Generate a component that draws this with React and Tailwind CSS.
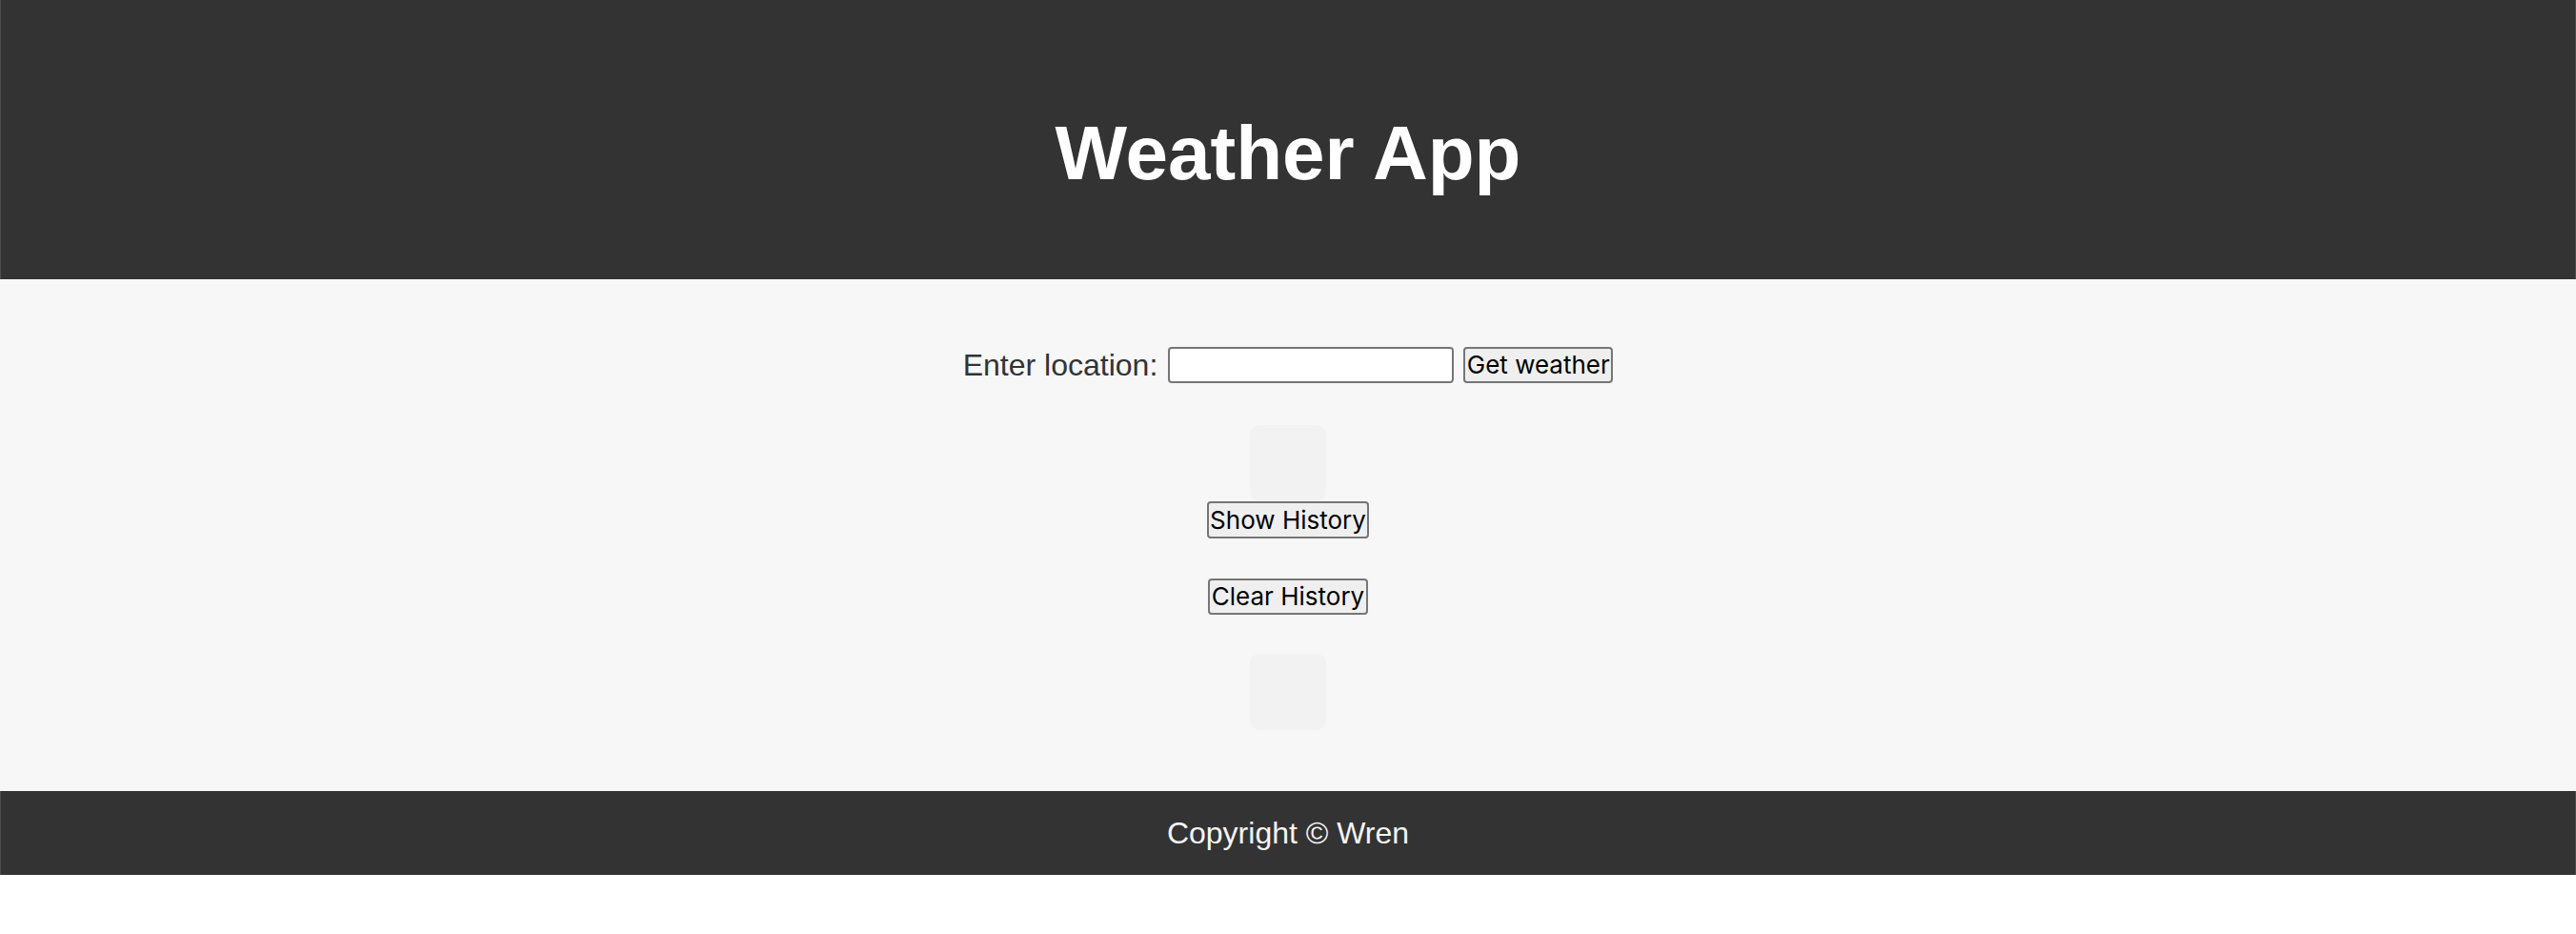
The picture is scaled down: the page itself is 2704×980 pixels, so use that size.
import { useState } from 'react';

export default function App() {
  const [location, setLocation] = useState('');

  return (
    <div className="min-h-screen bg-white font-['Liberation_Sans',Arial,sans-serif]">
      <header className="h-[293px] bg-[#333333] border-x border-[#4d4d4d] pt-[115px] text-center">
        <h1 className="text-[80px] leading-[92px] font-bold text-white">Weather App</h1>
      </header>

      <main className="h-[537px] bg-[#f7f7f7] pt-[71px] flex flex-col items-center text-[#333333]">
        <div className="flex items-center h-[38px]">
          <label className="text-[32px] leading-[38px]">Enter location:</label>
          <input
            type="text"
            value={location}
            onChange={(e) => setLocation(e.target.value)}
            className="ml-[11px] w-[300px] h-[38px] bg-white border-2 border-[#767676] rounded-[4px] px-1"
          />
          <button className="ml-[10px] w-[157px] h-[38px] bg-[#efefef] border-2 border-[#767676] rounded-[4px] text-black text-[26px] leading-none font-['Inter',sans-serif]">
            Get weather
          </button>
        </div>

        {/* resultado del clima */}
        <div className="mt-[44px] w-[80px] h-[80px] bg-[#f2f2f2] rounded-[10px]"></div>

        <button className="w-[170px] h-[39px] bg-[#efefef] border-2 border-[#767676] rounded-[4px] text-black text-[26px] leading-none font-['Inter',sans-serif]">
          Show History
        </button>

        <button className="mt-[42px] w-[168px] h-[38px] bg-[#efefef] border-2 border-[#767676] rounded-[4px] text-black text-[26px] leading-none font-['Inter',sans-serif]">
          Clear History
        </button>

        {/* historial */}
        <div className="mt-[41px] w-[80px] h-[80px] bg-[#f2f2f2] rounded-[10px]"></div>
      </main>

      <footer className="h-[88px] bg-[#333333] border-x border-[#4d4d4d] flex items-center justify-center text-[32px] text-[#f5f5f5]">
        Copyright © Wren
      </footer>
    </div>
  );
}
